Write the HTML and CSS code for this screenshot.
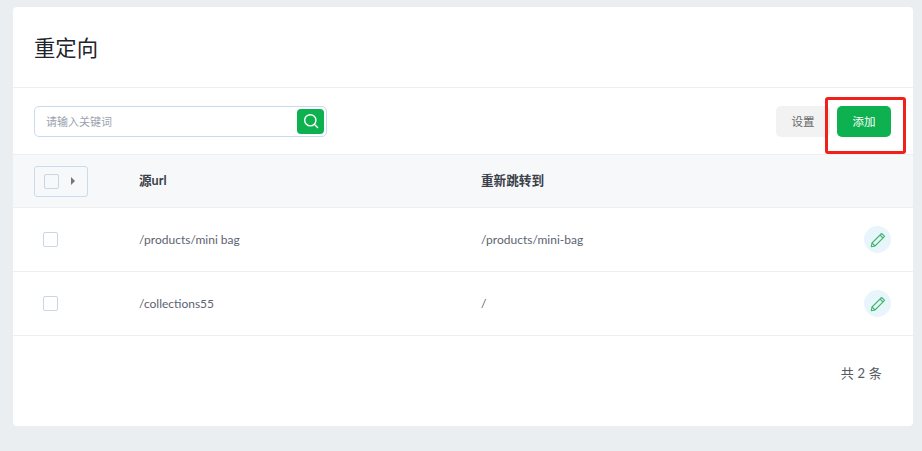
FILE: index.html
```html
<!DOCTYPE html>
<html lang="zh">
<head>
<meta charset="utf-8">
<title>重定向</title>
<link rel="stylesheet" href="styles.css">
</head>
<body>
<main class="card">
  <header class="head"><h1>重定向</h1></header>
  <div class="toolbar">
    <div class="search">
      <span class="placeholder">请输入关键词</span>
      <button class="search-btn" aria-label="搜索">
        <svg width="16" height="16" viewBox="0 0 16 16" fill="none" stroke="#fff" stroke-width="1.4" stroke-linecap="round"><circle cx="7.3" cy="7.3" r="5.6"/><path d="M11.5 11.5L14.6 14.6"/></svg>
      </button>
    </div>
    <div class="actions">
      <button class="btn btn-grey">设置</button>
      <button class="btn btn-green">添加</button>
    </div>
  </div>
  <div class="row row-head">
    <div class="col-check">
      <div class="bulk"><span class="box"></span><span class="caret"></span></div>
    </div>
    <div class="col-src">源url</div>
    <div class="col-dst">重新跳转到</div>
  </div>
  <div class="row">
    <div class="col-check"><span class="box box-row"></span></div>
    <div class="col-src">/products/mini bag</div>
    <div class="col-dst">/products/mini-bag</div>
    <button class="edit" aria-label="编辑">
      <svg width="16" height="16" viewBox="0 0 16 16" fill="none" stroke="#3fb56c" stroke-width="1.1" stroke-linejoin="round"><path d="M1.3 14.7L2 11L11.6 1.5L14.6 4.4L5 14Z"/><path d="M10 3.1L13 6M2 11L5 14"/></svg>
    </button>
  </div>
  <div class="row">
    <div class="col-check"><span class="box box-row"></span></div>
    <div class="col-src">/collections55</div>
    <div class="col-dst">/</div>
    <button class="edit" aria-label="编辑">
      <svg width="16" height="16" viewBox="0 0 16 16" fill="none" stroke="#3fb56c" stroke-width="1.1" stroke-linejoin="round"><path d="M1.3 14.7L2 11L11.6 1.5L14.6 4.4L5 14Z"/><path d="M10 3.1L13 6M2 11L5 14"/></svg>
    </button>
  </div>
  <div class="total">共 2 条</div>
</main>
<div class="annotation"></div>
</body>
</html>
```
FILE: styles.css
```css
* { box-sizing: border-box; }
html, body { height: 100%; }
body {
  margin: 0;
  padding: 7px 9px 25px 13px;
  background: #ebeef1;
  font-family: "Lato", "Noto Sans CJK SC", sans-serif;
  color: #5c6370;
  overflow: hidden;
}
.card {
  height: 419px;
  background: #fff;
  border-radius: 4px;
  display: flex;
  flex-direction: column;
}
.head {
  height: 81px;
  padding: 0 21px 2px;
  display: flex;
  align-items: center;
  border-bottom: 1px solid #edeff2;
}
h1 {
  margin: 0;
  font-size: 21.33px;
  font-weight: 400;
  color: #20242a;
}
.toolbar {
  height: 67px;
  padding: 0 22px 0 21px;
  display: flex;
  align-items: center;
  justify-content: space-between;
  border-bottom: 1px solid #edeff2;
}
.search {
  width: 293px;
  height: 31px;
  border: 1px solid #c9dbee;
  border-radius: 5px;
  padding: 2px;
  display: flex;
  align-items: center;
  justify-content: space-between;
}
.placeholder {
  padding: 0 0 0 9px;
  font-size: 11px;
  color: #9aa2ad;
}
.search-btn {
  width: 27px;
  height: 25px;
  padding: 0;
  border: 0;
  border-radius: 4px;
  background: #0db14f;
  display: flex;
  align-items: center;
  justify-content: center;
}
.actions { display: flex; gap: 7px; }
.btn {
  width: 54px;
  height: 31px;
  padding: 0;
  border: 0;
  border-radius: 5px;
  font-family: inherit;
  font-size: 11.5px;
}
.btn-grey { background: #f2f2f2; color: #666; }
.btn-green { background: #0db14f; color: #fff; }
.row {
  height: 64px;
  flex: none;
  display: flex;
  align-items: center;
  padding-left: 21px;
  border-bottom: 1px solid #edeff2;
  font-size: 12px;
  color: #5c6370;
}
.row-head {
  height: 53px;
  background: #f7f8fa;
  font-size: 12.6px;
  font-weight: 700;
  color: #3a4049;
}
.row-head .col-src,
.row-head .col-dst { padding-bottom: 3px; }
.col-check { width: 105px; flex: none; }
.col-src { width: 342px; flex: none; }
.col-dst { flex: 1; }
.bulk {
  width: 54px;
  height: 31px;
  border: 1px solid #c9dbee;
  border-radius: 3px;
  padding-left: 9px;
  display: flex;
  align-items: center;
  gap: 12px;
}
.box {
  width: 15px;
  height: 15px;
  flex: none;
  display: block;
  border: 1px solid #c9d6e4;
  border-radius: 2px;
  background: #fff;
}
.bulk .box { background: transparent; }
.box-row { margin-left: 9px; }
.caret {
  width: 0;
  height: 0;
  border-left: 4px solid #6f7782;
  border-top: 4px solid transparent;
  border-bottom: 4px solid transparent;
}
.edit {
  width: 27px;
  height: 27px;
  flex: none;
  margin-right: 22px;
  padding: 0;
  border: 0;
  border-radius: 50%;
  background: #e8f6fc;
  display: flex;
  align-items: center;
  justify-content: center;
}
.total {
  padding: 27px 31px 0 0;
  text-align: right;
  font-size: 13px;
  color: #555b64;
  letter-spacing: 0.2px;
}
.annotation {
  position: absolute;
  left: 825px;
  top: 97px;
  width: 81px;
  height: 57px;
  border: 3px solid #f0201a;
  border-radius: 3px;
}
```
